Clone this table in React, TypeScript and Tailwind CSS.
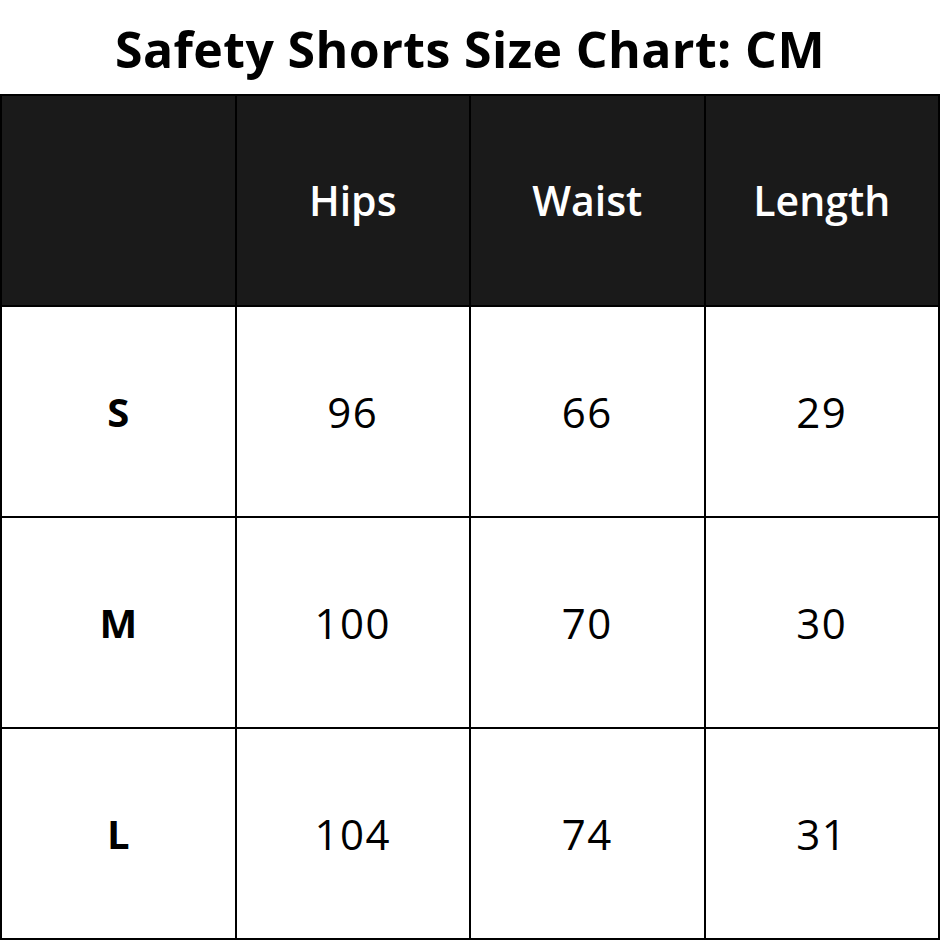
import { Fragment } from "react";

const headers = ["", "Hips", "Waist", "Length"];

const rows = [
  { size: "S", hips: "96", waist: "66", length: "29" },
  { size: "M", hips: "100", waist: "70", length: "30" },
  { size: "L", hips: "104", waist: "74", length: "31" },
];

export default function App() {
  return (
    <div className="w-[940px] h-[940px] bg-white flex flex-col" style={{ fontFamily: '"Open Sans", "Liberation Sans", sans-serif' }}>
      {/* Title */}
      <div className="h-[94px] flex items-center justify-center pt-[4px]">
        <h1 className="text-[50px] font-bold text-black leading-none tracking-[0.4px]">
          Safety Shorts Size Chart: CM
        </h1>
      </div>

      {/* Table */}
      <div className="flex-1 grid grid-cols-4 grid-rows-4 gap-[2px] bg-black border-2 border-black">
        {headers.map((h, i) => (
          <div
            key={i}
            className="bg-[#1a1a1a] flex items-center justify-center text-white text-[41px] font-semibold"
          >
            {h}
          </div>
        ))}
        {rows.map((r) => (
          <Fragment key={r.size}>
            <div className="bg-white flex items-center justify-center text-[40px] font-bold text-black">
              {r.size}
            </div>
            <div className="bg-white flex items-center justify-center text-[42px] tracking-[1.5px] text-black">
              {r.hips}
            </div>
            <div className="bg-white flex items-center justify-center text-[42px] tracking-[1.5px] text-black">
              {r.waist}
            </div>
            <div className="bg-white flex items-center justify-center text-[42px] tracking-[1.5px] text-black">
              {r.length}
            </div>
          </Fragment>
        ))}
      </div>
    </div>
  );
}
